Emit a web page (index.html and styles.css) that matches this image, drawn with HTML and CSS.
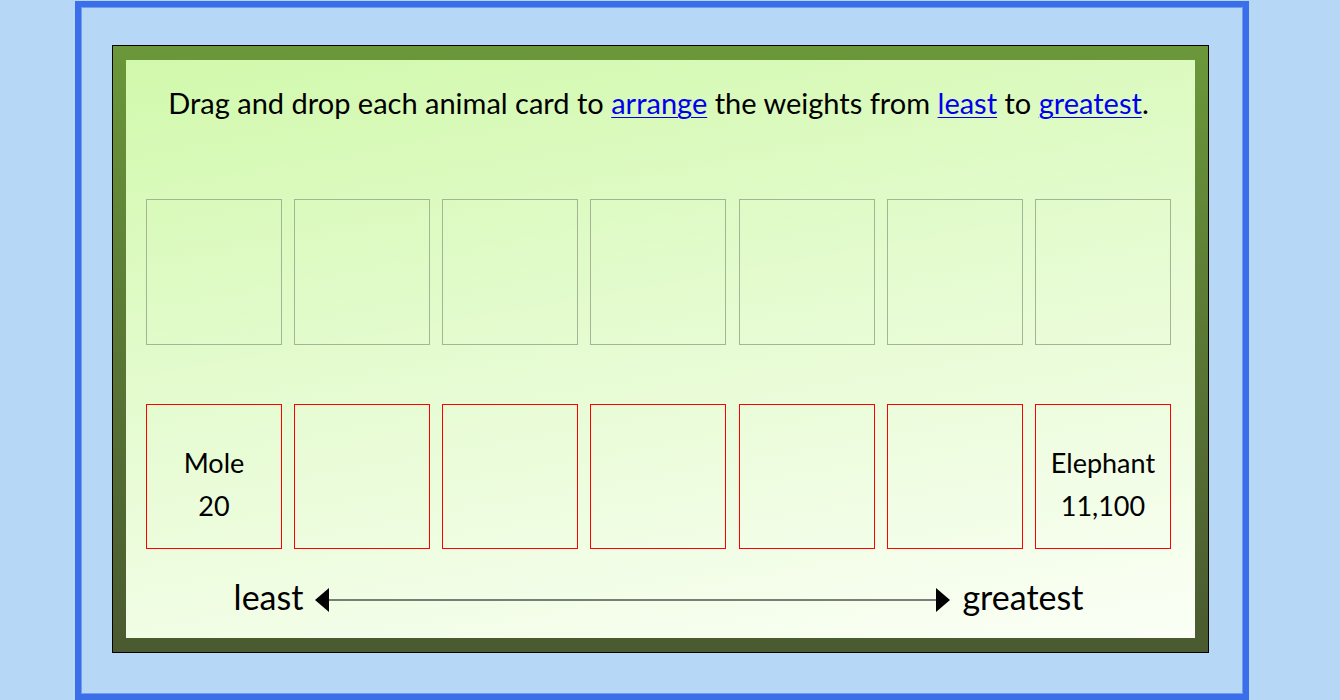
FILE: index.html
```html
<!DOCTYPE html>
<html lang="en">
<head>
<meta charset="utf-8">
<title>Arrange the weights</title>
<link rel="stylesheet" href="styles.css">
</head>
<body>
<div class="frame">
  <div class="board">
    <div class="inner">
      <p class="instructions">Drag and drop each animal card to <a href="#">arrange</a> the weights from <a href="#">least</a> to <a href="#">greatest</a>.</p>
      <div class="row targets">
        <div class="slot"></div>
        <div class="slot"></div>
        <div class="slot"></div>
        <div class="slot"></div>
        <div class="slot"></div>
        <div class="slot"></div>
        <div class="slot"></div>
      </div>
      <div class="row cards">
        <div class="card"><span class="name">Mole</span><span class="weight">20</span></div>
        <div class="card"></div>
        <div class="card"></div>
        <div class="card"></div>
        <div class="card"></div>
        <div class="card"></div>
        <div class="card"><span class="name">Elephant</span><span class="weight">11,100</span></div>
      </div>
      <div class="scale">
        <span class="scale-label">least</span>
        <svg class="arrow" width="635" height="26" viewBox="0 0 635 26">
          <line x1="14" y1="13" x2="621" y2="13" stroke="#000" stroke-width="1.2"/>
          <polygon points="0,13 14,1 14,25" fill="#000"/>
          <polygon points="635,13 621,1 621,25" fill="#000"/>
        </svg>
        <span class="scale-label">greatest</span>
      </div>
    </div>
  </div>
</div>
</body>
</html>
```

FILE: styles.css
```css
html, body {
  margin: 0;
  padding: 0;
}

body {
  background: #b6d8f6;
  font-family: "Lato", "Open Sans", sans-serif;
  overflow: hidden;
}

.frame {
  box-sizing: border-box;
  margin: 1px 0 0 75px;
  width: 1174px;
  height: 699px;
  border: 6px solid #3b6fe9;
  box-shadow: inset 1px 1px 0 #6f9df2, inset -1px -1px 0 #6f9df2;
  padding: 38px 0 0 31px;
}

.board {
  box-sizing: border-box;
  width: 1097px;
  height: 608px;
  border: 1px solid #000;
  padding: 14px 13px;
  background: linear-gradient(to bottom, #6b983a 0%, #5a7735 50%, #4a5a30 100%);
}

.inner {
  box-sizing: border-box;
  height: 100%;
  background: linear-gradient(170deg, #d1f9ac 0%, #e4fbcf 45%, #fbfff6 100%);
  padding: 0 24px 0 20px;
  display: flex;
  flex-direction: column;
}

.instructions {
  margin: 25px 0 0 0;
  text-align: center;
  font-size: 29px;
  line-height: 36px;
  color: #000;
}

.instructions a {
  color: #0000ee;
  text-decoration: underline;
  text-underline-offset: 3px;
  text-decoration-thickness: 1px;
}

.row {
  display: grid;
  grid-template-columns: repeat(7, 136px);
  column-gap: 12.17px;
}

.targets {
  margin-top: 78px;
}

.slot {
  box-sizing: border-box;
  height: 146px;
  border: 1px solid #a4b596;
}

.cards {
  margin-top: 59px;
}

.card {
  box-sizing: border-box;
  height: 145px;
  border: 1px solid #ff0000;
  display: flex;
  flex-direction: column;
  align-items: center;
  justify-content: center;
  gap: 10px;
  padding-top: 14px;
  font-size: 27px;
  line-height: 33px;
  color: #000;
}

.scale {
  margin-top: 30px;
  display: flex;
  align-items: center;
  justify-content: center;
  gap: 12px;
}

.scale-label {
  font-size: 34px;
  line-height: 36px;
  margin-bottom: 6px;
  color: #000;
}

.arrow {
  display: block;
}
```
